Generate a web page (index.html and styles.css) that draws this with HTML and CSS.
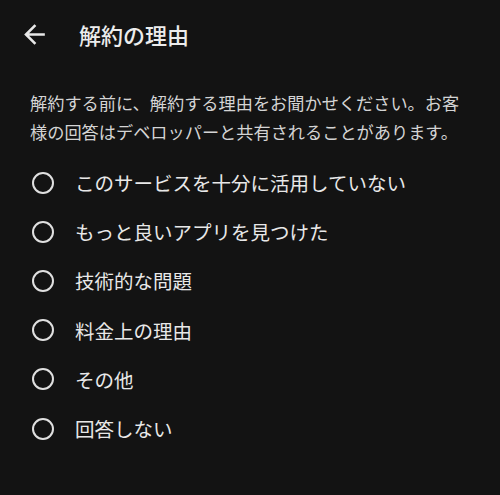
FILE: index.html
```html
<!DOCTYPE html>
<html lang="ja">
<head>
    <meta charset="UTF-8">
    <meta name="viewport" content="width=device-width, initial-scale=1.0">
    <title>解約の理由</title>
    <link rel="stylesheet" href="styles.css">
</head>
<body>
    <header class="top-bar">
        <button class="back-btn" aria-label="戻る">
            <svg viewBox="0 0 24 24" width="31" height="31">
                <path d="M20 11H7.83l5.59-5.59L12 4l-8 8 8 8 1.41-1.41L7.83 13H20v-2z" fill="currentColor"/>
            </svg>
        </button>
        <h1 class="title">解約の理由</h1>
    </header>

    <p class="intro">解約する前に、解約する理由をお聞かせください。お客様の回答はデベロッパーと共有されることがあります。</p>

    <div class="options">
        <label class="option"><input type="radio" name="reason"><span class="radio"></span>このサービスを十分に活用していない</label>
        <label class="option"><input type="radio" name="reason"><span class="radio"></span>もっと良いアプリを見つけた</label>
        <label class="option"><input type="radio" name="reason"><span class="radio"></span>技術的な問題</label>
        <label class="option"><input type="radio" name="reason"><span class="radio"></span>料金上の理由</label>
        <label class="option"><input type="radio" name="reason"><span class="radio"></span>その他</label>
        <label class="option"><input type="radio" name="reason"><span class="radio"></span>回答しない</label>
    </div>
</body>
</html>
```

FILE: styles.css
```css
body {
    margin: 0;
    background-color: #131313;
    color: #e6e6e6;
    font-family: "Noto Sans CJK JP", "Noto Sans", sans-serif;
}
.top-bar {
    height: 68px;
    display: flex;
    align-items: center;
    padding-left: 19px;
}
.back-btn {
    background: none;
    border: none;
    padding: 0;
    color: #e8e8e8;
    display: flex;
    cursor: pointer;
}
.title {
    margin: 0 0 0 29px;
    font-size: 22px;
    font-weight: 500;
    color: #ececec;
}
.intro {
    margin: 20px 30px 12px 30px;
    font-size: 17.2px;
    line-height: 29px;
    color: #d4d4d4;
}
.options {
    display: flex;
    flex-direction: column;
}
.option {
    height: 49.2px;
    display: flex;
    align-items: center;
    padding-left: 32px;
    font-size: 19.5px;
    color: #e8e8e8;
    cursor: pointer;
}
.option input {
    display: none;
}
.radio {
    width: 18px;
    height: 18px;
    border: 2.5px solid #e0e0e0;
    border-radius: 50%;
    margin-right: 21px;
    flex-shrink: 0;
}
```
